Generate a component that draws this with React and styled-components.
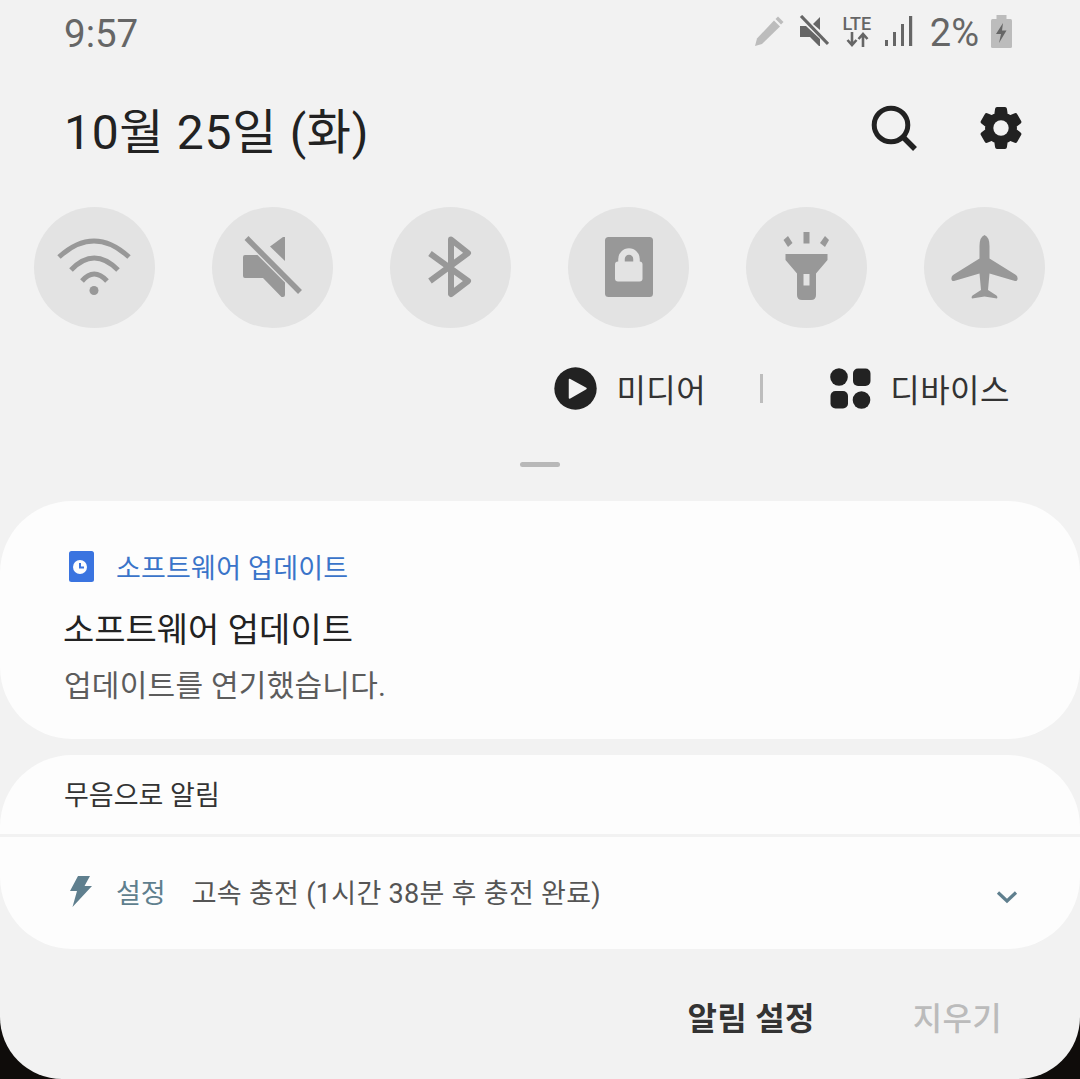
import React from "react";
import styled, { createGlobalStyle } from "styled-components";

const GlobalStyle = createGlobalStyle`
  html, body {
    margin: 0;
    padding: 0;
    background: #0f0c0a;
  }
  * {
    box-sizing: border-box;
  }
`;

const FONT = `Roboto, "Noto Sans CJK KR", sans-serif`;

const App = () => {
  const quickButtons = [
    { id: "wifi", icon: <WifiIcon /> },
    { id: "mute", icon: <MuteIcon /> },
    { id: "bluetooth", icon: <BluetoothIcon /> },
    { id: "folder", icon: <SecureFolderIcon /> },
    { id: "flash", icon: <FlashlightIcon /> },
    { id: "plane", icon: <PlaneIcon /> },
  ];

  return (
    <Panel>
      <GlobalStyle />
      <StatusBar>
        <Time>9:57</Time>
        <StatusIcons>
          <PencilIcon />
          <SmallMuteIcon />
          <Network>
            <LteText>LTE</LteText>
            <ArrowsIcon />
          </Network>
          <SignalIcon />
          <Percent>2%</Percent>
          <BatteryIcon />
        </StatusIcons>
      </StatusBar>

      <DateRow>
        <DateText>10월 25일 (화)</DateText>
        <HeaderActions>
          <SearchIcon />
          <GearIcon />
        </HeaderActions>
      </DateRow>

      <QuickRow>
        {quickButtons.map((button) => (
          <QuickButton key={button.id}>{button.icon}</QuickButton>
        ))}
      </QuickRow>

      <MediaRow>
        <MediaItem>
          <PlayIcon />
          <MediaLabel>미디어</MediaLabel>
        </MediaItem>
        <MediaDivider />
        <MediaItem>
          <DevicesIcon />
          <MediaLabel>디바이스</MediaLabel>
        </MediaItem>
      </MediaRow>

      <Handle />

      <UpdateCard>
        <AppRow>
          <ClockAppIcon />
          <AppName>소프트웨어 업데이트</AppName>
        </AppRow>
        <CardTitle>소프트웨어 업데이트</CardTitle>
        <CardBody>업데이트를 연기했습니다.</CardBody>
      </UpdateCard>

      <SilentCard>
        <SilentHeader>무음으로 알림</SilentHeader>
        <ChargeRow>
          <BoltIcon />
          <ChargeApp>설정</ChargeApp>
          <ChargeText>고속 충전 (1시간 38분 후 충전 완료)</ChargeText>
          <ChevronIcon />
        </ChargeRow>
      </SilentCard>

      <Footer>
        <FooterAction>알림 설정</FooterAction>
        <FooterAction $disabled>지우기</FooterAction>
      </Footer>
    </Panel>
  );
};

/* quick panel icons, all drawn on the 121px circle */

const QuickSvg = ({ children }) => (
  <svg width="121" height="121" viewBox="0 0 121 121" fill="none">
    {children}
  </svg>
);

const GREY = "#989898";
const CIRCLE = "#e3e3e3";

function WifiIcon() {
  return (
    <QuickSvg>
      <g stroke={GREY} strokeWidth="5">
        <path d="M25 50 Q60 18 95 50" />
        <path d="M37 63 Q60 39 84 63" />
        <path d="M48 74 Q60 60 73 74" />
      </g>
      <circle cx="60" cy="83.5" r="4.5" fill={GREY} />
    </QuickSvg>
  );
}

function MuteIcon() {
  return (
    <QuickSvg>
      <path
        d="M33 48H45.5L73 75.5V88Q73 90 71 90H69.5L51 71H33Q31 71 31 69V50Q31 48 33 48Z"
        fill={GREY}
      />
      <path d="M58 39.5L71 30H73V54Z" fill={GREY} />
      <path d="M34.5 31L88 85" stroke={GREY} strokeWidth="5.5" />
    </QuickSvg>
  );
}

function BluetoothIcon() {
  return (
    <QuickSvg>
      <path
        d="M40 46.5L78 74L61 87V32.5L78 46L40 74"
        stroke={GREY}
        strokeWidth="6"
        strokeLinejoin="round"
      />
    </QuickSvg>
  );
}

function SecureFolderIcon() {
  return (
    <QuickSvg>
      <rect x="37" y="30" width="48" height="60" rx="3.5" fill={GREY} />
      <path
        d="M53.5 56V52a7.5 7.5 0 0 1 15 0V56"
        stroke={CIRCLE}
        strokeWidth="6.5"
      />
      <rect x="47" y="54.5" width="27.5" height="20" rx="3" fill={CIRCLE} />
    </QuickSvg>
  );
}

function FlashlightIcon() {
  return (
    <QuickSvg>
      <rect x="57.5" y="25" width="6" height="11.5" fill={GREY} />
      <path d="M37.5 33L42 29L46.5 36L42 40Z" fill={GREY} />
      <path d="M83 33L79 29L74 36L79 40Z" fill={GREY} />
      <path
        fillRule="evenodd"
        d="M39.5 47H81.5V53L70 66.5V88Q70 93 65 93H56Q51 93 51 88V66.5L39.5 53ZM57.5 67V78.5H63.5V67Z"
        fill={GREY}
      />
    </QuickSvg>
  );
}

function PlaneIcon() {
  return (
    <QuickSvg>
      <path
        d="M60.5 28Q55.5 30 55.5 39V51.5L29 68Q27 69.5 27.5 72.5Q28 74.5 30 74L55.5 66.5L57 83L48.5 88.5Q47 90 48 91.5L60.5 89.5L73 91.5Q74 90 72.5 88.5L64 83L65.5 66.5L91 74Q93 74.5 93.5 72.5Q94 69.5 92 68L65.5 51.5V39Q65.5 30 60.5 28Z"
        fill={GREY}
      />
    </QuickSvg>
  );
}

/* status bar icons */

function PencilIcon() {
  return (
    <svg width="32" height="32" viewBox="0 0 32 32" style={{ marginRight: 14 }}>
      <path d="M25 1.5L30.5 7L28 9.5L22.5 4Z" fill="#bcbcbc" />
      <path d="M21 5.5L27 11.5L9 29L2 31L4 23.5Z" fill="#bcbcbc" />
    </svg>
  );
}

function SmallMuteIcon() {
  return (
    <svg width="30" height="32" viewBox="0 0 30 32" style={{ marginRight: 13 }}>
      <path d="M1 11H7L21 24V31H20L11 22H1Z" fill="#666" />
      <path d="M14 9L21 2V15Z" fill="#666" />
      <path d="M2 1L29 29" stroke="#666" strokeWidth="3.2" />
    </svg>
  );
}

function ArrowsIcon() {
  return (
    <svg width="24" height="15" viewBox="0 0 24 15">
      <path
        d="M7 0V12M2.5 8L7 13L11.5 8M18 15V2M13.5 7L18 2L22.5 7"
        stroke="#666"
        strokeWidth="2.6"
        fill="none"
      />
    </svg>
  );
}

function SignalIcon() {
  return (
    <svg width="28" height="30" viewBox="0 0 28 30" style={{ marginRight: 17 }}>
      <rect x="0" y="24" width="3" height="6" fill="#666" />
      <rect x="8" y="16" width="3" height="14" fill="#666" />
      <rect x="16" y="8" width="3" height="22" fill="#666" />
      <rect x="24" y="0" width="3.2" height="30" fill="#666" />
    </svg>
  );
}

function BatteryIcon() {
  return (
    <svg width="21" height="33" viewBox="0 0 21 33" style={{ marginLeft: 12 }}>
      <rect x="5.5" y="0" width="10" height="4" fill="#bcbcbc" />
      <rect x="0" y="4" width="21" height="29" rx="1.5" fill="#bcbcbc" />
      <path d="M12 8L5 19H10L8 28L15.5 15.5H11Z" fill="#666" />
    </svg>
  );
}

function SearchIcon() {
  return (
    <svg width="48" height="48" viewBox="0 0 48 48">
      <circle cx="21" cy="21" r="16.8" stroke="#222" strokeWidth="5" fill="none" />
      <path d="M33 33L45 45" stroke="#222" strokeWidth="5.5" />
    </svg>
  );
}

function GearIcon() {
  return (
    <svg width="50" height="50" viewBox="0 0 24 24">
      <path
        fill="#222"
        stroke="#222"
        strokeWidth="0.9"
        strokeLinejoin="round"
        d="M19.14 12.94c.04-.3.06-.61.06-.94 0-.32-.02-.64-.07-.94l2.03-1.58c.18-.14.23-.41.12-.61l-1.92-3.32c-.12-.22-.37-.29-.59-.22l-2.39.96c-.5-.38-1.03-.7-1.62-.94l-.36-2.54c-.04-.24-.24-.41-.48-.41h-3.84c-.24 0-.43.17-.47.41l-.36 2.54c-.59.24-1.13.57-1.62.94l-2.39-.96c-.22-.08-.47 0-.59.22L2.74 8.87c-.12.21-.08.47.12.61l2.03 1.58c-.05.3-.09.63-.09.94s.02.64.07.94l-2.03 1.58c-.18.14-.23.41-.12.61l1.92 3.32c.12.22.37.29.59.22l2.39-.96c.5.38 1.03.7 1.62.94l.36 2.54c.05.24.24.41.48.41h3.84c.24 0 .44-.17.47-.41l.36-2.54c.59-.24 1.13-.56 1.62-.94l2.39.96c.22.08.47 0 .59-.22l1.92-3.32c.12-.22.07-.47-.12-.61l-2.01-1.58z"
      />
      <circle cx="12" cy="12" r="3.7" fill="#f2f2f2" />
    </svg>
  );
}

function PlayIcon() {
  return (
    <svg width="43" height="43" viewBox="0 0 43 43">
      <circle cx="21.5" cy="21.5" r="21.2" fill="#222" />
      <path
        d="M15.5 12.5L32 21.5L15.5 31Z"
        fill="#f2f2f2"
        stroke="#f2f2f2"
        strokeWidth="1.5"
        strokeLinejoin="round"
      />
    </svg>
  );
}

function DevicesIcon() {
  return (
    <svg width="41" height="41" viewBox="0 0 41 41">
      <circle cx="9" cy="9" r="8.8" fill="#222" />
      <rect x="23" y="0.5" width="17.5" height="17.5" rx="5" fill="#222" />
      <rect x="0.5" y="23" width="17.5" height="17.5" rx="5" fill="#222" />
      <circle cx="31.5" cy="32" r="8.8" fill="#222" />
    </svg>
  );
}

function ClockAppIcon() {
  return (
    <svg width="25" height="31" viewBox="0 0 25 31">
      <rect width="25" height="31" rx="2.5" fill="#3a74e0" />
      <circle cx="11" cy="16" r="7" fill="#fdfdfd" />
      <path d="M11 12V16.5H15" stroke="#3a74e0" strokeWidth="2" fill="none" />
    </svg>
  );
}

function BoltIcon() {
  return (
    <svg width="22" height="31" viewBox="0 0 22 31">
      <path d="M8 0H20L14.5 10H22L2.5 31L7 15H0Z" fill="#5f7f8e" />
    </svg>
  );
}

function ChevronIcon() {
  return (
    <svg width="22" height="14" viewBox="0 0 22 14" style={{ marginTop: 11 }}>
      <path d="M2 2.5L11 11L20 2.5" stroke="#5f7f8e" strokeWidth="3.2" fill="none" />
    </svg>
  );
}

const Panel = styled.div`
  height: 1079px;
  width: 1080px;
  overflow: hidden;
  background: #f2f2f2;
  border-bottom-left-radius: 62px;
  border-bottom-right-radius: 62px;
  font-family: ${FONT};
`;

const StatusBar = styled.div`
  height: 66px;
  padding: 0 68px 0 64px;
  display: flex;
  align-items: center;
  justify-content: space-between;
`;

const Time = styled.div`
  font-size: 38.5px;
  color: #666;
`;

const StatusIcons = styled.div`
  padding-bottom: 4px;
  display: flex;
  align-items: center;
`;

const Network = styled.div`
  width: 30px;
  margin-right: 13px;
  display: flex;
  flex-direction: column;
  align-items: center;
`;

const LteText = styled.div`
  font-size: 18px;
  line-height: 16px;
  font-weight: 500;
  color: #666;
`;

const Percent = styled.div`
  margin-top: 4px;
  font-size: 38px;
  color: #666;
`;

const DateRow = styled.div`
  height: 124px;
  padding: 0 54px 0 64px;
  display: flex;
  align-items: center;
  justify-content: space-between;
`;

const DateText = styled.div`
  font-size: 48px;
  letter-spacing: 0.7px;
  color: #222;
`;

const HeaderActions = styled.div`
  display: flex;
  align-items: center;
  gap: 58px;
`;

const QuickRow = styled.div`
  margin-top: 17px;
  padding: 0 35px 0 34px;
  display: flex;
  justify-content: space-between;
`;

const QuickButton = styled.div`
  width: 121px;
  height: 121px;
  border-radius: 50%;
  background: ${CIRCLE};
`;

const MediaRow = styled.div`
  margin-top: 38px;
  height: 44px;
  padding-right: 70px;
  display: flex;
  align-items: center;
  justify-content: flex-end;
`;

const MediaItem = styled.div`
  display: flex;
  align-items: center;
  gap: 19px;
`;

const MediaLabel = styled.div`
  font-size: 32px;
  letter-spacing: 0.5px;
  color: #333;
`;

const MediaDivider = styled.div`
  width: 3px;
  height: 29px;
  margin: 0 67px 0 54px;
  background: #bdbdbd;
`;

const Handle = styled.div`
  width: 40px;
  height: 5px;
  margin: 52px auto 0;
  border-radius: 3px;
  background: #b8b8b8;
`;

const UpdateCard = styled.div`
  height: 238px;
  margin-top: 34px;
  padding: 50px 64px 0;
  border-radius: 72px;
  background: #fdfdfd;
`;

const AppRow = styled.div`
  height: 31px;
  padding-left: 5px;
  display: flex;
  align-items: center;
  gap: 22px;
`;

const AppName = styled.div`
  font-size: 27px;
  letter-spacing: 0.2px;
  color: #3a74c9;
`;

const CardTitle = styled.div`
  margin-top: 24px;
  margin-left: -1px;
  font-size: 34px;
  line-height: 48px;
  color: #222;
`;

const CardBody = styled.div`
  margin-top: 11px;
  font-size: 30px;
  letter-spacing: 0.25px;
  line-height: 42px;
  color: #5c5c5c;
`;

const SilentCard = styled.div`
  height: 194px;
  margin-top: 16px;
  border-radius: 72px;
  background: #fdfdfd;
`;

const SilentHeader = styled.div`
  height: 82px;
  padding: 0 64px 3px;
  display: flex;
  align-items: center;
  font-size: 27px;
  color: #333;
  border-bottom: 3px solid #f2f2f2;
`;

const ChargeRow = styled.div`
  height: 112px;
  padding: 0 62px 3px 70px;
  display: flex;
  align-items: center;
`;

const ChargeApp = styled.div`
  margin-left: 24px;
  font-size: 27px;
  color: #5f7f8e;
`;

const ChargeText = styled.div`
  flex: 1;
  margin-left: 26px;
  font-size: 27px;
  letter-spacing: 0.3px;
  color: #555;
`;

const Footer = styled.div`
  margin-top: 42px;
  padding-right: 78px;
  display: flex;
  justify-content: flex-end;
  gap: 98px;
`;

const FooterAction = styled.div`
  font-size: 32px;
  letter-spacing: 0.3px;
  line-height: 56px;
  font-weight: ${(props) => (props.$disabled ? 500 : 700)};
  color: ${(props) => (props.$disabled ? "#bbb" : "#333")};
`;

export default App;
